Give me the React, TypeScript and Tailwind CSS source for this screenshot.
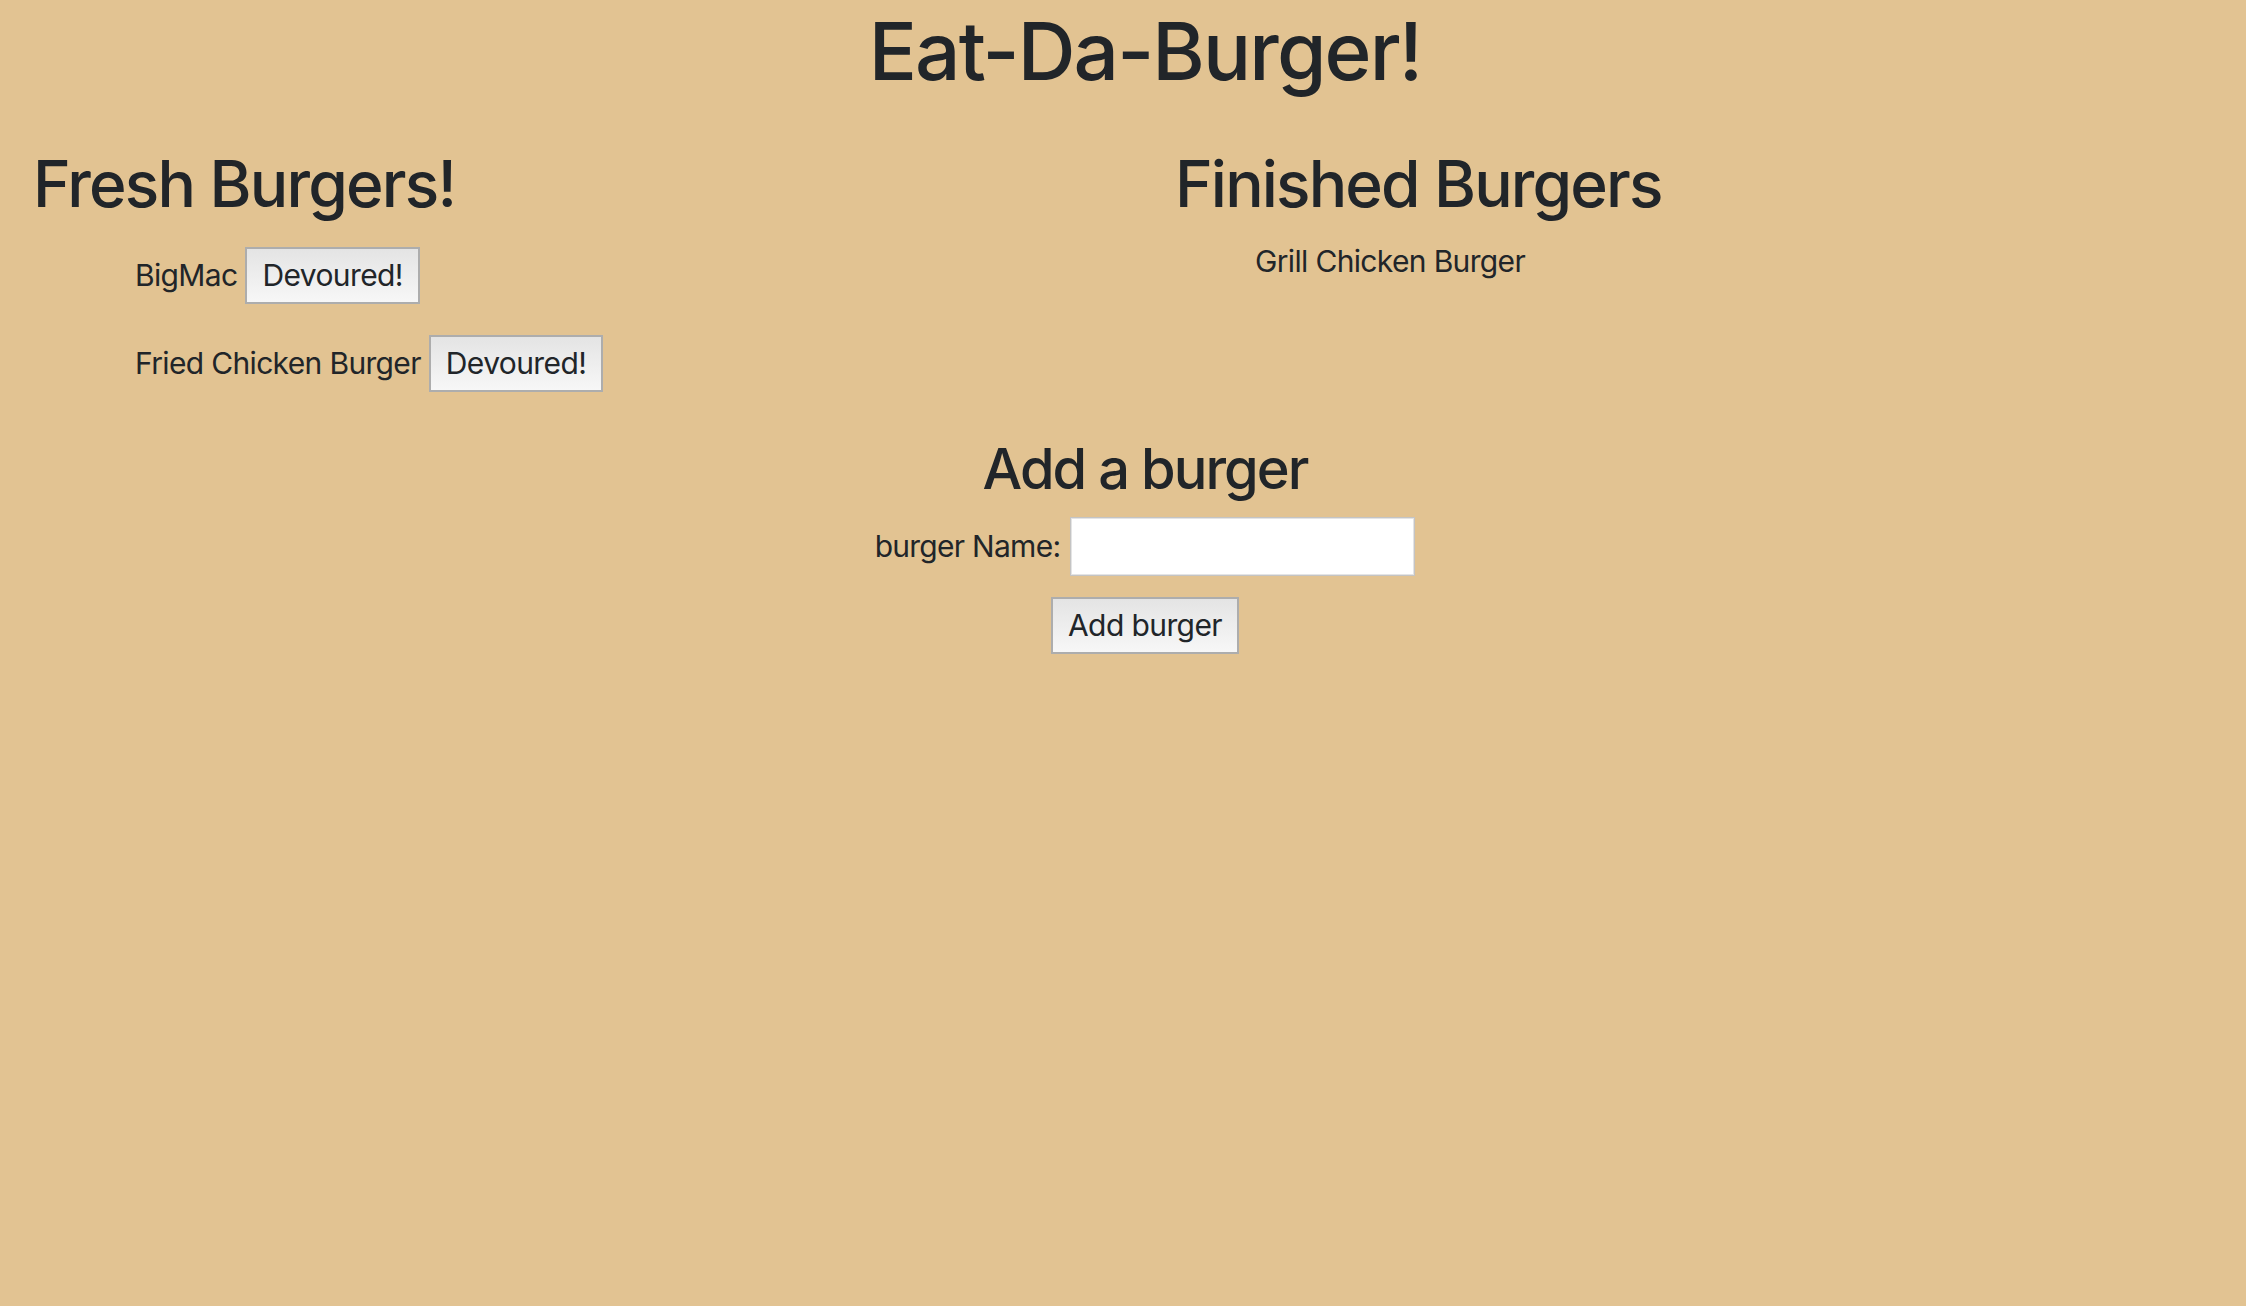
import React from 'react';

const FRESH = ['BigMac', 'Fried Chicken Burger'];
const FINISHED = ['Grill Chicken Burger'];

const btn =
  'h-[57px] px-[15px] border-2 border-[#adadad] bg-gradient-to-b from-[#e4e4e4] to-[#f7f7f7] text-[30px] leading-[53px] tracking-[-0.02em] text-[#212529]';

const App: React.FC = () => {
  return (
    <div className="min-h-[1306px] w-full overflow-hidden bg-[#e2c392] text-[#212529] font-['Inter','Liberation_Sans',sans-serif]">
      <div className="w-[2290px] pt-[1px]">
        <h1 className="pt-[10px] text-center text-[80px] leading-[80px] font-medium tracking-[-0.023em]">
          Eat-Da-Burger!
        </h1>

        <div className="grid grid-cols-2 mt-[61px]">
          {/* fresh */}
          <div className="pl-[33px]">
            <h2 className="text-[64px] leading-[64px] font-medium tracking-[-0.028em]">Fresh Burgers!</h2>
            <ul className="pl-[102px] mt-[31px] flex flex-col gap-[31px]">
              {FRESH.map(name => (
                <li key={name} className="flex items-center h-[57px] gap-[8px]">
                  <span className="text-[30px] leading-[57px] tracking-[-0.022em]">{name}</span>
                  <button className={btn}>Devoured!</button>
                </li>
              ))}
            </ul>
          </div>

          {/* finished */}
          <div className="pl-[30px]">
            <h2 className="text-[64px] leading-[64px] font-medium tracking-[-0.029em]">Finished Burgers</h2>
            <ul className="pl-[80px] mt-[17px]">
              {FINISHED.map(name => (
                <li key={name} className="text-[30px] leading-[57px] tracking-[-0.022em]">{name}</li>
              ))}
            </ul>
          </div>
        </div>

        <div className="mt-[49px] flex flex-col items-center">
          <h3 className="text-[56px] leading-[56px] font-medium tracking-[-0.035em]">Add a burger</h3>
          <div className="mt-[20px] flex items-center gap-[10px]">
            <label className="text-[30px] leading-[59px] tracking-[-0.024em]">burger Name:</label>
            <input
              type="text"
              className="w-[345px] h-[59px] bg-white border border-[#c4c4c4] shadow-[inset_0_0_0_1px_#e4e4e4] outline-none"
            />
          </div>
          <button className={`${btn} mt-[21px]`}>Add burger</button>
        </div>
      </div>
    </div>
  );
};

export default App;
